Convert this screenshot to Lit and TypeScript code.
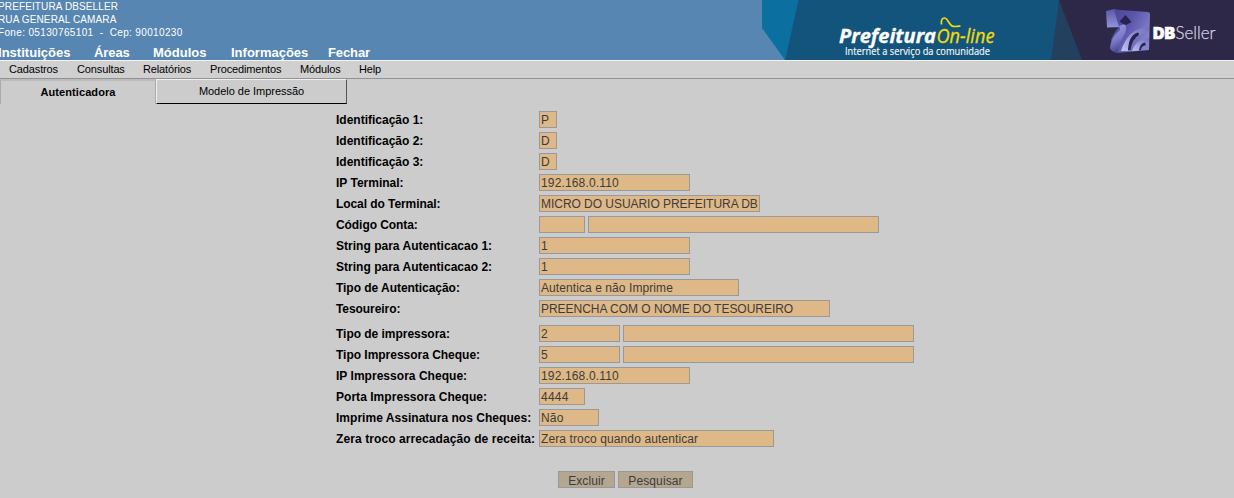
import { LitElement, html, css, svg } from "lit";
import { customElement } from "lit/decorators.js";

interface Field { w: number; text?: string; track?: number }
interface Row { label: string; track?: number; fields: Field[]; gap?: boolean }

const rows: Row[] = [
  { label: "Identificação 1:", fields: [{ w: 18, text: "P" }] },
  { label: "Identificação 2:", fields: [{ w: 18, text: "D" }] },
  { label: "Identificação 3:", fields: [{ w: 18, text: "D" }] },
  { label: "IP Terminal:", fields: [{ w: 151, text: "192.168.0.110", track: 0.15 }] },
  { label: "Local do Terminal:", track: -0.07, fields: [{ w: 221, text: "MICRO DO USUARIO PREFEITURA DB", track: -0.04 }] },
  { label: "Código Conta:", track: -0.07, fields: [{ w: 46 }, { w: 291 }] },
  { label: "String para Autenticacao 1:", track: 0.02, fields: [{ w: 151, text: "1" }] },
  { label: "String para Autenticacao 2:", track: 0.02, fields: [{ w: 151, text: "1" }] },
  { label: "Tipo de Autenticação:", track: -0.04, fields: [{ w: 200, text: "Autentica e não Imprime", track: 0.08 }] },
  { label: "Tesoureiro:", track: -0.07, fields: [{ w: 291, text: "PREENCHA COM O NOME DO TESOUREIRO", track: -0.03 }] },
  { label: "Tipo de impressora:", track: -0.03, fields: [{ w: 81, text: "2" }, { w: 291 }], gap: true },
  { label: "Tipo Impressora Cheque:", track: -0.02, fields: [{ w: 81, text: "5" }, { w: 291 }] },
  { label: "IP Impressora Cheque:", track: 0.03, fields: [{ w: 151, text: "192.168.0.110", track: 0.15 }] },
  { label: "Porta Impressora Cheque:", track: 0.04, fields: [{ w: 46, text: "4444", track: 0.25 }] },
  { label: "Imprime Assinatura nos Cheques:", track: 0.03, fields: [{ w: 60, text: "Não", track: 0.2 }] },
  { label: "Zera troco arrecadação de receita:", track: 0.09, fields: [{ w: 235, text: "Zera troco quando autenticar", track: 0.11 }] },
];

/* text, slot width, letter-spacing */
const modules: [string, number, number][] = [
  ["Instituições", 96, 0.03], ["Áreas", 59, -0.1], ["Módulos", 78, 0], ["Informações", 97, 0], ["Fechar", 50, -0.1],
];
const menu: [string, number, number][] = [
  ["Cadastros", 68, -0.13], ["Consultas", 66, -0.13], ["Relatórios", 67, -0.14],
  ["Procedimentos", 90, -0.16], ["Módulos", 59, -0.14], ["Help", 30, -0.15],
];
const company: [string, number][] = [
  ["PREFEITURA DBSELLER", 0.12], ["RUA GENERAL CAMARA", 0.12], ["Fone: 05130765101  -  Cep: 90010230", 0.35],
];

const banner = svg`
  <defs>
    <linearGradient id="front" x1="0" y1="0" x2="1" y2=".6">
      <stop offset="0" stop-color="#4b4496"/><stop offset=".5" stop-color="#5c57aa"/><stop offset="1" stop-color="#8784cd"/>
    </linearGradient>
    <linearGradient id="block" x1="0" y1="0" x2="0" y2="1">
      <stop offset="0" stop-color="#5c57a6"/><stop offset="1" stop-color="#9294dc"/>
    </linearGradient>
    <linearGradient id="leg" x1="0" y1="0" x2=".3" y2="1">
      <stop offset="0" stop-color="#9a9ce2"/><stop offset=".6" stop-color="#7b7bcb"/><stop offset="1" stop-color="#4a458f"/>
    </linearGradient>
    <linearGradient id="arch" x1="0" y1="1" x2="1" y2="0">
      <stop offset="0" stop-color="#bfc3ee"/><stop offset=".6" stop-color="#8b8cd5"/><stop offset="1" stop-color="#716fbd"/>
    </linearGradient>
  </defs>
  <path fill="#0b709f" d="M0 0H38L23 60L0 28Z"/>
  <path fill="#13547c" d="M36.500 0H300V60H23Z"/>
  <path fill="#23405f" d="M297 0H330V60H289Z"/>
  <path fill="#2d2847" d="M297 0H472V60H320Z"/>
  <g font-family="Open Sans, sans-serif" font-style="italic">
    <text x="77" y="43" font-size="19" font-weight="700" fill="#fff" stroke="#fff" stroke-width=".3" textLength="97" lengthAdjust="spacingAndGlyphs">Prefeitura</text>
    <text x="174.500" y="43" font-size="19.500" fill="#f0dc0a" stroke="#f0dc0a" stroke-width=".3" textLength="58" lengthAdjust="spacingAndGlyphs">On-line</text>
  </g>
  <path d="M179.600 24.500C178.800 21 180 18 182.500 18C186 18 187 26 191.500 26.400C194 26.700 196 26.300 198.500 26" fill="none" stroke="#f0dc0a" stroke-width="1.700"/>
  <text x="83" y="54.600" font-family="Open Sans, sans-serif" font-size="10" fill="#f4f8fb" stroke="#f4f8fb" stroke-width=".15" textLength="145" lengthAdjust="spacingAndGlyphs">Internet a serviço da comunidade</text>
  <path fill="url(#block)" d="M344 11L352 9L362 12V27L345 27.500Z"/>
  <path fill="url(#front)" d="M352 9.500L386 12Q388 12.500 388 14L387 50L354 53L349 40Q352 32 357 27Z"/>
  <path fill="url(#leg)" d="M357 26L363 24Q366 30 361 37Q357 44 356 53Q349 52 348 48Q349 37 357 31Q359 29 357 26Z"/>
  <path fill="#282252" d="M357.500 21.500L363.500 15L369.500 22L364 25L361 24Z"/>
  <path fill="url(#arch)" d="M387 27Q366 28 359 51L366 51Q370 36 387 31Z"/>
  <path fill="url(#arch)" d="M387 38Q374 39 370 51L377 50.500Q380 43 387 42Z"/>
  <path fill="#28234f" d="M366 50Q367 34 376.500 32.500L377 35Q370 39 368.500 50Z"/>
  <path fill="#28234f" d="M377 50.500Q378 43 383 42.500L384 45Q379 46 379 50Z"/>
  <text x="391" y="39" font-family="Inter, sans-serif" font-size="16.500" font-weight="900" fill="#fff" stroke="#fff" stroke-width=".7" textLength="22" lengthAdjust="spacingAndGlyphs">DB</text>
  <text x="413.500" y="39" font-family="Lato, sans-serif" font-size="18" font-weight="300" fill="#d4d1e2" stroke="#d4d1e2" stroke-width=".25" textLength="40" lengthAdjust="spacingAndGlyphs">Seller</text>
`;

const slots = (items: [string, number, number][]) =>
  items.map(([t, w, s]) => html`<span style="width:${w}px;letter-spacing:${s}px">${t}</span>`);

@customElement("app-root")
export class AppRoot extends LitElement {
  static styles = css`
    :host { display: block; height: 498px; overflow: hidden; background: #ccc; color: #000;
      font-family: "Liberation Sans", Arial, sans-serif; font-size: 12px; box-sizing: border-box; }
    * { box-sizing: border-box; }
    .header { height: 60px; background: #5786b2; display: flex; justify-content: space-between; color: #fff; overflow: hidden; }
    .left { display: flex; flex-direction: column; margin-left: -2px; }
    .company { font-size: 10px; line-height: 13px; white-space: pre; height: 45px; }
    .modules { display: flex; font-size: 13px; font-weight: bold; line-height: 15px; white-space: nowrap; }
    .banner { display: block; width: 472px; height: 60px; flex: none; }
    .menu { height: 19px; display: flex; padding-left: 9px; border-top: 1px solid #f4f4f4; border-bottom: 1px solid #929292;
      background: #d0d0d0; font-size: 11px; line-height: 17px; }
    .tabs { display: flex; height: 25px; line-height: 24px; font-size: 11px; text-align: center; }
    .tab { width: 156px; border: 1px solid #aaa; border-width: 2px 1px 0 1px; border-top-color: #bbb; font-weight: bold; line-height: 22px; letter-spacing: .08px; }
    .tab.other { width: 191px; border: 1px solid; border-color: #f0f0f0 #555 #000 #f0f0f0; font-weight: normal; line-height: 23px; letter-spacing: -.03px; }
    .form { display: flex; flex-direction: column; gap: 4px; padding: 7px 0 0 336px; }
    .row { display: flex; height: 17px; }
    .row.gap { margin-top: 4px; }
    .label { width: 203px; font-weight: bold; line-height: 18px; white-space: nowrap; }
    .fields { display: flex; gap: 3px; }
    .field { height: 17px; border: 1px solid #999; background: #deb887; color: #3c3c3c; padding-left: 1px; line-height: 16px; white-space: nowrap; overflow: hidden; }
    .actions { display: flex; gap: 3px; padding: 24px 0 0 558px; }
    .btn { width: 57px; height: 17px; border: 1px solid #999; border-radius: 0; background: #b5a68f; color: #3c3c3c; padding: 1px 0 0;
      font: 12px/16px "Liberation Sans", Arial, sans-serif; letter-spacing: .1px; }
    .btn.wide { width: 75px; }
  `;

  render() {
    return html`
      <header class="header">
        <div class="left">
          <div class="company">${company.map(([t, s]) => html`<div style="letter-spacing:${s}px">${t}</div>`)}</div>
          <nav class="modules">${slots(modules)}</nav>
        </div>
        <svg class="banner" viewBox="0 0 472 60">${banner}</svg>
      </header>
      <nav class="menu">${slots(menu)}</nav>
      <div class="tabs"><div class="tab">Autenticadora</div><div class="tab other">Modelo de Impressão</div></div>
      <main class="form">
        ${rows.map((r) => html`<div class="row ${r.gap ? "gap" : ""}">
          <div class="label" style="letter-spacing:${r.track ?? 0}px">${r.label}</div>
          <div class="fields">${r.fields.map((f) => html`<div class="field" style="width:${f.w}px;letter-spacing:${f.track ?? 0}px">${f.text ?? ""}</div>`)}</div>
        </div>`)}
      </main>
      <div class="actions"><button class="btn">Excluir</button><button class="btn wide">Pesquisar</button></div>
    `;
  }
}
